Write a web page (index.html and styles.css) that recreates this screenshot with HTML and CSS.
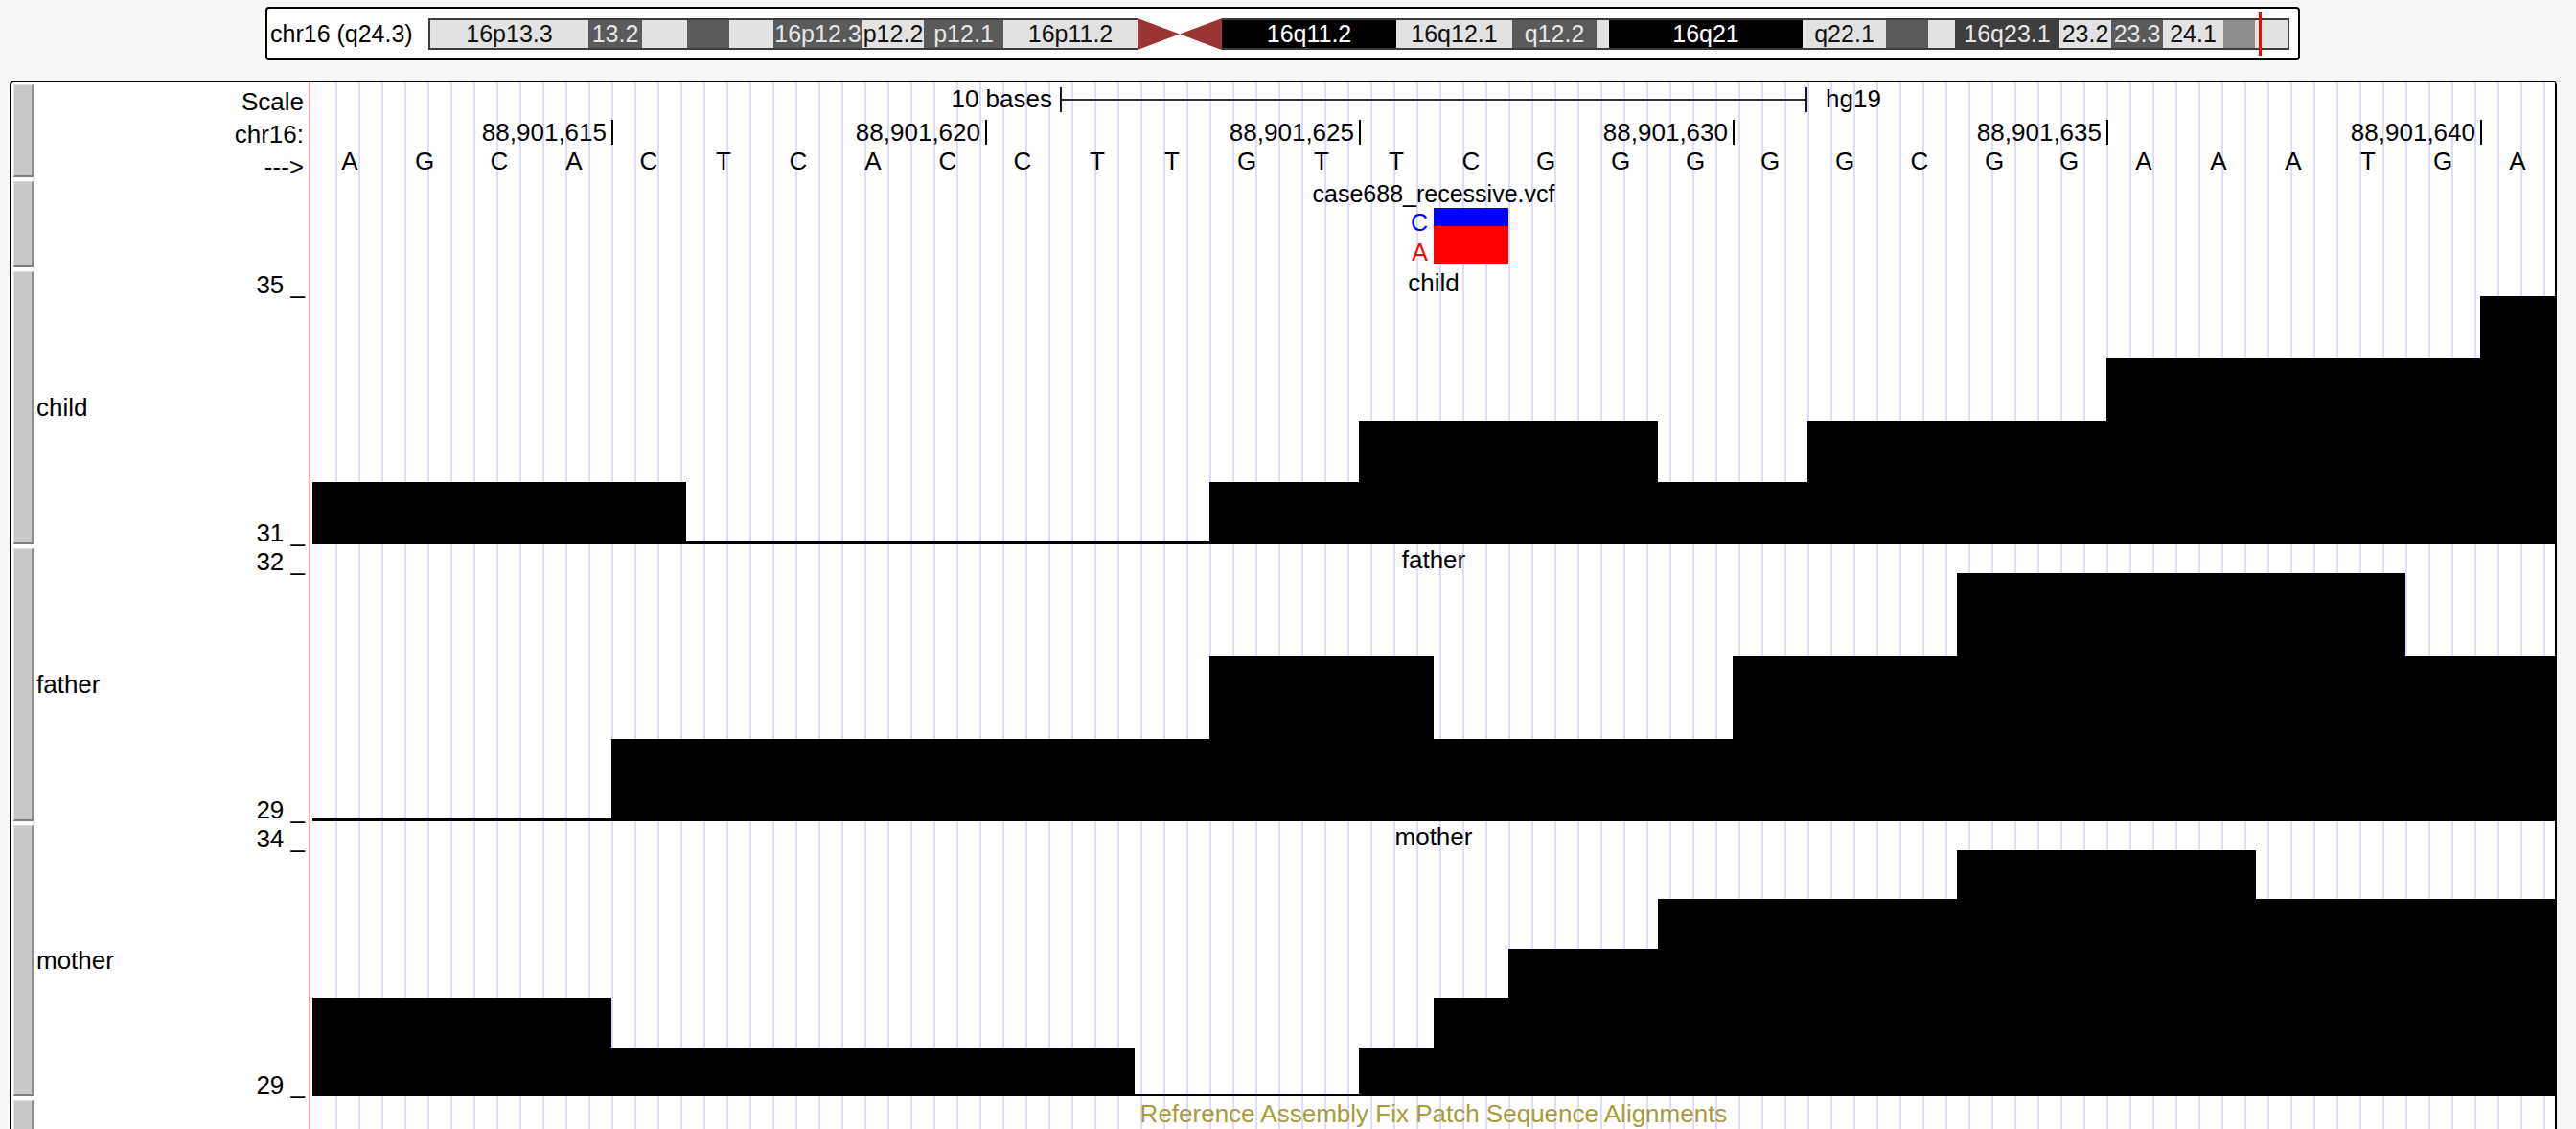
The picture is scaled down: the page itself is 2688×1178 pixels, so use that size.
FILE: index.html
```html
<!DOCTYPE html>
<html>
<head>
<meta charset="utf-8">
<title>UCSC Genome Browser - chr16</title>
<link rel="stylesheet" href="styles.css">
</head>
<body>
<div class="page">
  <div class="ideo">
    <div class="ideo-label">chr16 (q24.3)</div>
    <div class="chrom">
      <div class="band lt first" style="width:167px">16p13.3</div>
      <div class="band dk" style="width:56px">13.2</div>
      <div class="band lt" style="width:47px"></div>
      <div class="band dk" style="width:44px"></div>
      <div class="band lt" style="width:46px"></div>
      <div class="band dk" style="width:93px">16p12.3</div>
      <div class="band lt" style="width:64px">p12.2</div>
      <div class="band dk" style="width:83px">p12.1</div>
      <div class="band lt" style="width:140px">16p11.2</div>
      <svg class="cen" width="88" height="33" viewBox="0 0 88 33"><polygon points="0,0 44,16.5 0,33" fill="#993535"/><polygon points="88,0 44,16.5 88,33" fill="#993535"/></svg>
      <div class="band bk" style="width:182px">16q11.2</div>
      <div class="band lt" style="width:121px">16q12.1</div>
      <div class="band dk" style="width:88px">q12.2</div>
      <div class="band lt" style="width:13px"></div>
      <div class="band bk" style="width:202px">16q21</div>
      <div class="band lt" style="width:87px">q22.1</div>
      <div class="band dk" style="width:44px"></div>
      <div class="band lt" style="width:28px"></div>
      <div class="band dk2" style="width:109px">16q23.1</div>
      <div class="band lt" style="width:54px">23.2</div>
      <div class="band dk" style="width:54px">23.3</div>
      <div class="band lt" style="width:63px">24.1</div>
      <div class="band md" style="width:33px"></div>
      <div class="band lt last" style="width:36px"></div>
      <div class="pos-mark"></div>
    </div>
  </div>

  <div class="browser">
    <!-- ruler -->
    <div class="track t-ruler">
      <div class="handle"></div>
      <div class="lbl lbl-ruler">
        <div>Scale</div>
        <div>chr16:</div>
        <div>---&gt;</div>
      </div>
      <div class="data">
        <div class="scale-row">
          <div class="scale-left">10 bases</div>
          <div class="scale-bar"></div>
          <div class="scale-right">hg19</div>
        </div>
        <div class="tick-row">
          <div class="tick-cell first"><span>88,901,615</span><i></i></div>
          <div class="tick-cell"><span>88,901,620</span><i></i></div>
          <div class="tick-cell"><span>88,901,625</span><i></i></div>
          <div class="tick-cell"><span>88,901,630</span><i></i></div>
          <div class="tick-cell"><span>88,901,635</span><i></i></div>
          <div class="tick-cell"><span>88,901,640</span><i></i></div>
        </div>
        <div class="base-row">
          <span>A</span><span>G</span><span>C</span><span>A</span><span>C</span>
          <span>T</span><span>C</span><span>A</span><span>C</span><span>C</span>
          <span>T</span><span>T</span><span>G</span><span>T</span><span>T</span>
          <span>C</span><span>G</span><span>G</span><span>G</span><span>G</span>
          <span>G</span><span>C</span><span>G</span><span>G</span><span>A</span>
          <span>A</span><span>A</span><span>T</span><span>G</span><span>A</span>
        </div>
      </div>
    </div>

    <!-- vcf -->
    <div class="track t-vcf">
      <div class="handle"></div>
      <div class="lbl"></div>
      <div class="data">
        <div class="center-label vcf-title">case688_recessive.vcf</div>
        <div class="gt">
          <div class="gt-letters">
            <div class="al-c">C</div>
            <div class="al-a">A</div>
          </div>
          <div class="gt-box">
            <div class="gt-c"></div>
            <div class="gt-a"></div>
          </div>
        </div>
      </div>
    </div>

    <!-- child -->
    <div class="track t-graph t-child">
      <div class="handle"></div>
      <div class="lbl lbl-graph">
        <div class="name">child</div>
        <div class="axis"><div>35 _</div><div>31 _</div></div>
      </div>
      <div class="data">
        <div class="center-label">child</div>
        <svg class="graph" viewBox="0 0 2340 259" preserveAspectRatio="none" shape-rendering="crispEdges">
          <rect x="0" y="194.25" width="390" height="64.75"/>
          <rect x="390" y="256" width="546" height="3"/>
          <rect x="936" y="194.25" width="156" height="64.75"/>
          <rect x="1092" y="129.5" width="312" height="129.5"/>
          <rect x="1404" y="194.25" width="156" height="64.75"/>
          <rect x="1560" y="129.5" width="312" height="129.5"/>
          <rect x="1872" y="64.75" width="390" height="194.25"/>
          <rect x="2262" y="0" width="78" height="259"/>
        </svg>
      </div>
    </div>

    <!-- father -->
    <div class="track t-graph t-father">
      <div class="handle"></div>
      <div class="lbl lbl-graph">
        <div class="name">father</div>
        <div class="axis"><div>32 _</div><div>29 _</div></div>
      </div>
      <div class="data">
        <div class="center-label">father</div>
        <svg class="graph" viewBox="0 0 2340 259" preserveAspectRatio="none" shape-rendering="crispEdges">
          <rect x="0" y="256" width="312" height="3"/>
          <rect x="312" y="172.67" width="624" height="86.33"/>
          <rect x="936" y="86.33" width="234" height="172.67"/>
          <rect x="1170" y="172.67" width="312" height="86.33"/>
          <rect x="1482" y="86.33" width="234" height="172.67"/>
          <rect x="1716" y="0" width="468" height="259"/>
          <rect x="2184" y="86.33" width="156" height="172.67"/>
        </svg>
      </div>
    </div>

    <!-- mother -->
    <div class="track t-graph t-mother">
      <div class="handle"></div>
      <div class="lbl lbl-graph">
        <div class="name">mother</div>
        <div class="axis"><div>34 _</div><div>29 _</div></div>
      </div>
      <div class="data">
        <div class="center-label">mother</div>
        <svg class="graph" viewBox="0 0 2340 257" preserveAspectRatio="none" shape-rendering="crispEdges">
          <rect x="0" y="154.2" width="312" height="102.8"/>
          <rect x="312" y="205.6" width="546" height="51.4"/>
          <rect x="858" y="254" width="234" height="3"/>
          <rect x="1092" y="205.6" width="78" height="51.4"/>
          <rect x="1170" y="154.2" width="78" height="102.8"/>
          <rect x="1248" y="102.8" width="156" height="154.2"/>
          <rect x="1404" y="51.4" width="312" height="205.6"/>
          <rect x="1716" y="0" width="312" height="257"/>
          <rect x="2028" y="51.4" width="312" height="205.6"/>
        </svg>
      </div>
    </div>

    <!-- fix patches -->
    <div class="track t-fix">
      <div class="handle"></div>
      <div class="lbl"></div>
      <div class="data">
        <div class="center-label fix-label">Reference Assembly Fix Patch Sequence Alignments</div>
      </div>
    </div>
  </div>
</div>
</body>
</html>
```

FILE: styles.css
```css
* { box-sizing: border-box; }
html, body { margin: 0; padding: 0; }
body {
  width: 2688px;
  height: 1178px;
  overflow: hidden;
  background: #f6f6f4;
  font-family: "Liberation Sans", Arial, Helvetica, sans-serif;
  font-size: 26px;
  color: #000;
}
.page {
  display: flex;
  flex-direction: column;
  padding-top: 7px;
}

/* ---------- chromosome ideogram ---------- */
.ideo {
  margin-left: 277px;
  width: 2123px;
  height: 56px;
  border: 2px solid #000;
  border-radius: 4px;
  background: #fff;
  display: flex;
  align-items: center;
}
.ideo-label {
  width: 168px;
  padding-left: 3px;
  font-size: 25px;
  white-space: nowrap;
}
.chrom {
  position: relative;
  display: flex;
  height: 33px;
}
.band {
  height: 33px;
  border-top: 2px solid #3c3c3c;
  border-bottom: 2px solid #3c3c3c;
  font-size: 25px;
  line-height: 29px;
  text-align: center;
  white-space: nowrap;
  overflow: visible;
  display: flex;
  justify-content: center;
}
.band.first { border-left: 2px solid #3c3c3c; }
.band.last { border-right: 2px solid #3c3c3c; }
.band.lt { background: #e2e2e2; color: #111; }
.band.dk { background: #5a5a5a; color: #e6e6e6; }
.band.dk2 { background: #3e3e3e; color: #e6e6e6; }
.band.bk { background: #000; color: #fff; }
.band.md { background: #8c8c8c; }
.cen { display: block; flex: none; }
.pos-mark {
  position: absolute;
  left: 1910px;
  top: -6px;
  width: 3px;
  height: 45px;
  background: #ff0000;
}

/* ---------- main browser image ---------- */
.browser {
  margin: 21px 0 0 10px;
  width: 2658px;
  border: 2px solid #000;
  border-bottom: none;
  border-radius: 5px 5px 0 0;
  background: #fff;
  display: flex;
  flex-direction: column;
}
.track {
  display: flex;
}
.t-ruler { height: 101px; }
.t-vcf { height: 94px; }
.t-child, .t-father { height: 289px; }
.t-mother { height: 287px; }
.t-fix { height: 40px; }

.handle {
  flex: none;
  width: 21px;
  margin: 2px 0 2px 2px;
  background: #c8c8c8;
  border-top: 1px solid #dedede;
  border-left: 1px solid #dedede;
  border-right: 2px solid #8e8e8e;
  border-bottom: 2px solid #7c7c7c;
}
.lbl {
  flex: none;
  width: 287px;
  white-space: nowrap;
}
.lbl-ruler {
  padding-top: 3px;
  padding-right: 5px;
  text-align: right;
  line-height: 34px;
}
.lbl-graph {
  display: flex;
  justify-content: space-between;
  padding-right: 4px;
}
.lbl-graph .name {
  align-self: center;
  padding-left: 3px;
}
.lbl-graph .axis {
  display: flex;
  flex-direction: column;
  justify-content: space-between;
  text-align: right;
  line-height: 28px;
  padding-top: 2px;
}

.data {
  flex: none;
  width: 2344px;
  border-left: 2px solid #f7aaaa;
  padding-left: 2px;
  background:
    linear-gradient(#fff, #fff) 0 0 / 4px 100% no-repeat,
    repeating-linear-gradient(90deg, transparent 0 2px, #dcdcff 2px 4px, transparent 4px 24px) #fff;
  display: flex;
  flex-direction: column;
  white-space: nowrap;
}

/* ruler */
.scale-row {
  height: 35px;
  display: grid;
  grid-template-columns: 1fr 780px 1fr;
  align-items: center;
}
.scale-left { text-align: right; padding-right: 8px; }
.scale-right { padding-left: 19px; }
.scale-bar {
  height: 26px;
  border-left: 2px solid #1a1a1a;
  border-right: 2px solid #1a1a1a;
  background: linear-gradient(#333, #333) center / 100% 2px no-repeat;
}
.tick-row {
  height: 34px;
  display: flex;
}
.tick-cell {
  width: 390px;
  display: flex;
  justify-content: flex-end;
  align-items: center;
}
.tick-cell.first { width: 314px; }
.tick-cell span { margin-right: 5px; }
.tick-cell i {
  display: block;
  width: 2px;
  height: 26px;
  background: #000;
}
.base-row {
  height: 27px;
  display: flex;
  line-height: 27px;
}
.base-row span {
  width: 78px;
  text-align: center;
}

/* vcf */
.center-label {
  height: 28px;
  line-height: 28px;
  text-align: center;
  flex: none;
}
.vcf-title { height: 30px; line-height: 30px; font-size: 25px; }
.gt {
  display: flex;
  margin-left: 1134px;
}
.gt-letters {
  width: 36px;
  padding-right: 6px;
  text-align: right;
  line-height: 24px;
  font-size: 25px;
}
.al-c { color: #0000ff; margin-top: 3px; }
.al-a { color: #ff0000; margin-top: 7px; }
.gt-box { width: 78px; }
.gt-c { height: 19px; background: #0000ff; }
.gt-a { height: 39px; background: #ff0000; }

/* graphs */
.graph {
  display: block;
  width: 2340px;
  fill: #000;
}
.t-child .graph, .t-father .graph { height: 259px; flex: none; }
.t-mother .graph { height: 257px; flex: none; }

.fix-label {
  height: 32px;
  line-height: 32px;
  color: #a89c3a;
}
```
